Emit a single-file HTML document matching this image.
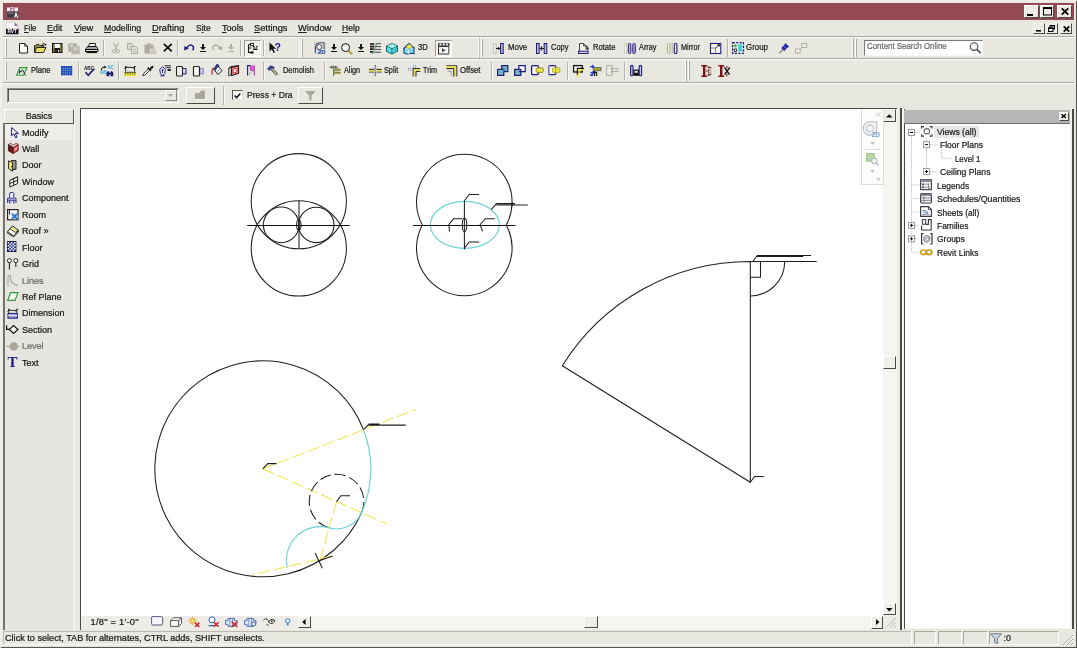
<!DOCTYPE html>
<html lang="en">
<head>
<meta charset="utf-8">
<title>Revit</title>
<style>
*{box-sizing:border-box;margin:0;padding:0}
html,body{width:1077px;height:648px;overflow:hidden;background:#E8E7E0}
body{position:relative;will-change:transform;font-family:"Liberation Sans",sans-serif;font-size:9px;color:#111;line-height:1}
.a{position:absolute}
.t{position:absolute;white-space:nowrap;line-height:13px;height:13px;-webkit-text-stroke:.22px #222}
u{text-decoration:underline;text-underline-offset:1px}
#frame{left:0;top:0;width:1077px;height:648px;border:2px solid #EFEEE9;border-right:1px solid #55534D;border-bottom:1px solid #55534D}
#title{left:3px;top:3px;width:1071px;height:17px;background:#944A52}
.gl{position:absolute;background:#A9A79F}
.wl{position:absolute;background:#FBFBF9}
.dk{position:absolute;background:#4A4944}
.sep{position:absolute;width:2px;border-left:1px solid #B5B3AA;border-right:1px solid #F8F8F5}
.grip{position:absolute;width:2px;border-left:1px solid #fff;border-right:1px solid #A9A79F}
.btn{position:absolute;background:#E8E7E0;border:1px solid #fff;border-right:1px solid #4A4944;border-bottom:1px solid #4A4944}
.sb{background:#EFEEE9}
.pressed{position:absolute;background:#F3F2EE;border:1px solid #9d9b93;border-right:1px solid #fff;border-bottom:1px solid #fff}
svg{position:absolute;overflow:visible}
.pl{left:19px}
.dis{color:#A5A39B}
.tb{font-size:9px}
.tr{font-size:8.6px}
</style>
</head>
<body>
<div id="frame" class="a"></div>
<div id="title" class="a"></div>
<svg style="left:6.5px;top:6.5px" width="11.5" height="11" viewBox="0 0 11.5 11" ><rect x="0" y="0.5" width="3" height="3.8" fill="#f4f4f8"/><rect x="3.6" y="0" width="3" height="4.2" fill="#e4d8ec"/><rect x="7.4" y="0.5" width="3.6" height="3.8" fill="#f4f4f8"/><rect x="4" y="0.8" width="1.6" height="1.4" fill="#c040b0"/><rect x="0.3" y="4.6" width="10.8" height="6" fill="#3a3a42"/><rect x="0.8" y="5.2" width="6" height="2" fill="#6a6a78"/><path d="M7.6 10.6L9 6L10.6 10.6" fill="none" stroke="#f4f4f8" stroke-width="1.3"/></svg>
<div class="btn" style="left:1024px;top:4.5px;width:14.5px;height:13.5px;background:#EDECE7"></div>
<div class="btn" style="left:1039.5px;top:4.5px;width:14.5px;height:13.5px;background:#EDECE7"></div>
<div class="btn" style="left:1057px;top:4.5px;width:14.5px;height:13.5px;background:#EDECE7"></div>
<svg style="left:1027px;top:13.5px" width="6" height="2" viewBox="0 0 6 2" ><rect width="6" height="2" fill="#000"/></svg>
<svg style="left:1042.5px;top:7px" width="9" height="8.5" viewBox="0 0 9 8.5" ><rect x="0.5" y="1" width="8" height="7" fill="none" stroke="#000" stroke-width="1"/><rect x="0" y="0" width="9" height="2" fill="#000"/></svg>
<svg style="left:1060.5px;top:7.5px" width="8" height="7" viewBox="0 0 8 7" ><path d="M0.7 0.3L7.3 6.7M7.3 0.3L0.7 6.7" stroke="#000" stroke-width="1.7"/></svg>
<svg style="left:6px;top:22px" width="12.5" height="12.5" viewBox="0 0 12.5 12.5" ><path d="M0.5 0.5H8.6L12 3.8V12H0.5Z" fill="#fff" stroke="#d8c8d8" stroke-width=".8"/><path d="M8.6 0.5V3.8H12Z" fill="#8a3a9a"/><rect x="0" y="6.8" width="12.5" height="5.4" fill="#15101c"/><text x="1.4" y="11.4" font-family="Liberation Sans,sans-serif" font-size="4.8" font-weight="bold" fill="#fff">RVT</text></svg>
<span class="t mn" style="left:23.8px;top:22.3px;font-size:9px;transform:scaleX(0.855);transform-origin:0 50%;"><u>F</u>ile</span>
<span class="t mn" style="left:47.3px;top:22.3px;font-size:9px;transform:scaleX(0.987);transform-origin:0 50%;"><u>E</u>dit</span>
<span class="t mn" style="left:73.7px;top:22.3px;font-size:9px;transform:scaleX(0.998);transform-origin:0 50%;"><u>V</u>iew</span>
<span class="t mn" style="left:104px;top:22.3px;font-size:9px;transform:scaleX(0.963);transform-origin:0 50%;"><u>M</u>odelling</span>
<span class="t mn" style="left:152px;top:22.3px;font-size:9px;transform:scaleX(1.028);transform-origin:0 50%;"><u>D</u>rafting</span>
<span class="t mn" style="left:195.6px;top:22.3px;font-size:9px;transform:scaleX(0.941);transform-origin:0 50%;">S<u>i</u>te</span>
<span class="t mn" style="left:221.7px;top:22.3px;font-size:9px;transform:scaleX(1.009);transform-origin:0 50%;"><u>T</u>ools</span>
<span class="t mn" style="left:253.8px;top:22.3px;font-size:9px;transform:scaleX(1.030);transform-origin:0 50%;"><u>S</u>ettings</span>
<span class="t mn" style="left:298px;top:22.3px;font-size:9px;transform:scaleX(1.043);transform-origin:0 50%;"><u>W</u>indow</span>
<span class="t mn" style="left:342.3px;top:22.3px;font-size:9px;transform:scaleX(0.956);transform-origin:0 50%;"><u>H</u>elp</span>
<div class="btn" style="left:1033px;top:23px;width:12px;height:10.5px;background:#EDECE7;border-color:#F3F2EE;border-right-color:#4A4944;border-bottom-color:#4A4944"></div>
<div class="btn" style="left:1045.5px;top:23px;width:12px;height:10.5px;background:#EDECE7;border-color:#F3F2EE;border-right-color:#4A4944;border-bottom-color:#4A4944"></div>
<div class="btn" style="left:1060px;top:23px;width:12px;height:10.5px;background:#EDECE7;border-color:#F3F2EE;border-right-color:#4A4944;border-bottom-color:#4A4944"></div>
<svg style="left:1035.5px;top:30px" width="5" height="1.6" viewBox="0 0 5 1.6" ><rect width="5" height="1.6" fill="#000"/></svg>
<svg style="left:1048px;top:25px" width="7" height="7" viewBox="0 0 7 7" ><rect x="2" y="0.5" width="4.5" height="3.5" fill="none" stroke="#000"/><rect x="2" y="0" width="5" height="1.5" fill="#000"/><rect x="0.5" y="3" width="4.5" height="3.5" fill="#EDECE7" stroke="#000"/><rect x="0" y="2.5" width="5.5" height="1.5" fill="#000"/></svg>
<svg style="left:1062.5px;top:25.5px" width="7" height="6" viewBox="0 0 7 6" ><path d="M0.7 0.3L6.3 5.7M6.3 0.3L0.7 5.7" stroke="#000" stroke-width="1.6"/></svg>
<div class="gl" style="left:3px;top:36px;width:1071px;height:1px"></div>
<div class="wl" style="left:3px;top:37px;width:1071px;height:1px"></div>
<div class="grip" style="left:5px;top:39px;height:18px"></div>
<svg style="left:18.5px;top:42.5px" width="9" height="10.5" viewBox="0 0 9 10.5" ><path d="M0.5 0.5H5.8L8.5 3.2V10H0.5Z" fill="#fff" stroke="#222"/><path d="M5.8 0.5V3.2H8.5" fill="none" stroke="#222"/></svg>
<svg style="left:34px;top:43px" width="12.5" height="10" viewBox="0 0 12.5 10" ><path d="M0.5 9.5V2.5H1.5L2.5 1.5H5L6 2.5H9.5V4.5" fill="#8C8A2E" stroke="#222"/><path d="M0.5 9.5L2.8 4.5H12L9.5 9.5Z" fill="#E6DE6E" stroke="#222"/><path d="M8 1.5Q10 -0.3 11.5 1.6" fill="none" stroke="#111" stroke-width="1"/><path d="M10.2 2.5L12.3 2.6L12.2 0.6Z" fill="#111"/></svg>
<svg style="left:51.7px;top:43px" width="10.5" height="10" viewBox="0 0 10.5 10" ><rect x="0.5" y="0.5" width="9.5" height="9" fill="#111" stroke="#111"/><rect x="1" y="1" width="1.5" height="8" fill="#8C8A2E"/><rect x="8" y="1" width="1.5" height="8" fill="#8C8A2E"/><rect x="2.6" y="0.8" width="5.3" height="4.2" fill="#fff"/><rect x="3" y="6.5" width="4.5" height="3" fill="#2a2a2a"/><rect x="6" y="7" width="1.2" height="2" fill="#ddd"/></svg>
<svg style="left:68.2px;top:42.5px" width="12" height="11" viewBox="0 0 12 11" ><rect x="0.3" y="0.3" width="8.5" height="8.5" fill="#AFAD9F"/><rect x="3.5" y="3" width="8.3" height="8" fill="#B9B7AA" stroke="#C9C7BC" stroke-width=".6"/><rect x="2" y="1" width="3" height="2.6" fill="#D5D4CB"/><rect x="6" y="4.5" width="3.4" height="2.6" fill="#D5D4CB"/></svg>
<svg style="left:84.8px;top:43px" width="13.5" height="10" viewBox="0 0 13.5 10" ><path d="M3.5 3.5L4.5 0.5H10.5L10 3.5Z" fill="#fff" stroke="#222"/><path d="M0.5 6.5L2.5 3.5H11.5L13 6.5V8.5H0.5Z" fill="#d8d8d8" stroke="#111"/><path d="M0.5 6.5H13" stroke="#111"/><path d="M1.5 9.5H12" stroke="#111" stroke-width="1.2"/><path d="M2.5 5H11" stroke="#555" stroke-width=".8"/></svg>
<div class="sep" style="left:103px;top:40px;height:16px"></div>
<svg style="left:111.5px;top:43px" width="8" height="11" viewBox="0 0 8 11" ><path d="M1.5 0L5 6.5M6.5 0L3 6.5" stroke="#AFAD9F" stroke-width="1.1" fill="none"/><circle cx="2" cy="8.3" r="1.6" fill="none" stroke="#AFAD9F" stroke-width="1"/><circle cx="6" cy="8.3" r="1.6" fill="none" stroke="#AFAD9F" stroke-width="1"/></svg>
<svg style="left:127px;top:43px" width="11" height="11" viewBox="0 0 11 11" ><path d="M0.5 0.5H4.5L6 2V6.5H0.5Z" fill="#D9D8CF" stroke="#AFAD9F"/><path d="M4.5 3.5H8.5L10.5 5.5V10.5H4.5Z" fill="#E2E1D9" stroke="#AFAD9F"/><path d="M6 6.5H9M6 8.5H9" stroke="#AFAD9F" stroke-width=".8"/></svg>
<svg style="left:143.5px;top:42.5px" width="12" height="11" viewBox="0 0 12 11" ><rect x="0.5" y="1.5" width="9" height="9" rx="1" fill="#AFAD9F"/><rect x="3" y="0.3" width="4" height="2.2" fill="#AFAD9F"/><path d="M5.5 5.5H10L11.5 7V10.5H5.5Z" fill="#D9D8CF" stroke="#B8B6AA" stroke-width=".8"/><path d="M7 8.5H10" stroke="#AFAD9F" stroke-width=".8"/></svg>
<svg style="left:163px;top:43px" width="9.6" height="9.2" viewBox="0 0 9.6 9.2" ><path d="M0.8 0.8L8.8 8.4M8.8 0.8L0.8 8.4" stroke="#111" stroke-width="1.8" fill="none"/></svg>
<div class="sep" style="left:177px;top:40px;height:16px"></div>
<svg style="left:183.8px;top:44px" width="10.5" height="7" viewBox="0 0 10.5 7" ><path d="M3 4Q5.6 -0.6 8.6 1.8Q10.6 4 8.6 6.4" fill="none" stroke="#1c1c7a" stroke-width="1.4"/><path d="M0.1 6.4L0.6 1.8L4.8 4.4Z" fill="#1c1c7a"/></svg>
<svg style="left:200px;top:44px" width="6" height="8" viewBox="0 0 6 8" ><path d="M2 0h2v3h2L3 6 0 3h2z" fill="#111"/><path d="M0 7.5h6" stroke="#111" stroke-width="1"/></svg>
<svg style="left:211.5px;top:44px" width="10.5" height="7" viewBox="0 0 10.5 7" ><path d="M7.5 4Q4.9 -0.6 1.9 1.8Q-0.1 4 1.9 6.4" fill="none" stroke="#AFAD9F" stroke-width="1.3"/><path d="M10.4 6.4L9.9 1.8L5.7 4.4Z" fill="#AFAD9F"/></svg>
<svg style="left:227.5px;top:44px" width="6" height="8" viewBox="0 0 6 8" ><path d="M2 0h2v3h2L3 6 0 3h2z" fill="#AFAD9F"/><path d="M0 7.5h6" stroke="#AFAD9F" stroke-width="1"/></svg>
<div class="sep" style="left:239.5px;top:40px;height:16px"></div>
<div class="pressed" style="left:243.5px;top:39.5px;width:17px;height:17px"></div>
<svg style="left:247px;top:42.5px" width="11" height="11" viewBox="0 0 11 11" ><path d="M1.5 1.5V9.5H4M1.5 5H4.5M1.5 1.5H4" fill="none" stroke="#111" stroke-width="1.1"/><rect x="3.5" y="0.3" width="3" height="2.4" fill="#fff" stroke="#111" stroke-width=".9"/><rect x="3.5" y="8.3" width="3" height="2.4" fill="#111"/><path d="M6 3.8H10.5M6 6.3H10.5" stroke="#111" stroke-width="1.6"/><rect x="7.6" y="3" width="1.5" height="1.5" fill="#eee"/></svg>
<div class="sep" style="left:262.5px;top:40px;height:16px"></div>
<svg style="left:268.5px;top:42px" width="12" height="12" viewBox="0 0 12 12" ><path d="M0.5 0.5V9.5L2.8 7.3L4.6 11L6 10.3L4.3 6.7H7.2Z" fill="#111"/><text x="5.5" y="8.6" font-family="Liberation Sans,sans-serif" font-weight="bold" font-size="10.5" fill="#1c1c7a">?</text></svg>
<div class="wl" style="left:298.5px;top:39px;width:1px;height:18px"></div>
<div class="grip" style="left:301.3px;top:39px;height:18px"></div>
<svg style="left:313.5px;top:41.5px" width="11.5" height="12" viewBox="0 0 11.5 12" ><rect x="0" y="0" width="11.5" height="12" fill="#C3CCD6"/><path d="M1.5 10.5V4.5A4 4 0 0 1 5.5 0.8H10V7" fill="#EEF1F4" stroke="#3a3f48" stroke-width="1"/><circle cx="5.3" cy="5" r="2.6" fill="#EEF1F4" stroke="#3a3f48" stroke-width="1"/><text x="4" y="11.6" font-family="Liberation Sans,sans-serif" font-weight="bold" font-size="6" fill="#1d4fa8">2D</text></svg>
<svg style="left:330.5px;top:44px" width="6" height="8" viewBox="0 0 6 8" ><path d="M2 0h2v3h2L3 6 0 3h2z" fill="#111"/><path d="M0 7.5h6" stroke="#111" stroke-width="1"/></svg>
<svg style="left:341px;top:42.5px" width="12" height="11.5" viewBox="0 0 12 11.5" ><circle cx="4.6" cy="4.6" r="4" fill="#F4F4F0" stroke="#111" stroke-width="1"/><path d="M7.6 7.6L11 11" stroke="#8C8A2E" stroke-width="2.2"/><path d="M7.8 7.4L11.3 10.6" stroke="#E6DE6E" stroke-width=".9"/></svg>
<svg style="left:357.8px;top:44px" width="6" height="8" viewBox="0 0 6 8" ><path d="M2 0h2v3h2L3 6 0 3h2z" fill="#111"/><path d="M0 7.5h6" stroke="#111" stroke-width="1"/></svg>
<svg style="left:370px;top:42.5px" width="11" height="11" viewBox="0 0 11 11" ><path d="M0 1H4.5M0 3.6H4.3M0 6.2H3.6M0 8.8H2.6" stroke="#111" stroke-width="1.7"/><path d="M6.5 0.7H11M6 3.6H11M5 6.4H11M4.2 9.2H11" stroke="#333" stroke-width=".9"/><path d="M6.8 0L2.6 11" stroke="#2a8f8f" stroke-width="1"/></svg>
<svg style="left:386px;top:42.5px" width="12" height="11.5" viewBox="0 0 12 11.5" ><path d="M6 0.5L11.5 3V8.3L6 11L0.5 8.3V3Z" fill="#5FE0E6" stroke="#0f5f66" stroke-width="1"/><path d="M0.5 3L6 5.6L11.5 3M6 5.6V11" fill="none" stroke="#0f5f66" stroke-width="1"/><path d="M6 0.9L10.8 3L6 5.2L1.2 3Z" fill="#A8F2F4"/><path d="M6.4 6L11 3.8V8L6.4 10.3Z" fill="#3CC6CF"/></svg>
<svg style="left:403.3px;top:42.5px" width="12" height="11.5" viewBox="0 0 12 11.5" ><path d="M1 5.5V10L4.5 11.2L7 10.2L11 10.6V5.5" fill="#7ad7ee" stroke="#0d3e8a" stroke-width="1.1"/><path d="M0.3 6L6 0.6L11.7 5.6" fill="none" stroke="#0d3e8a" stroke-width="1.3"/><path d="M6 1L9.5 3.6L6.6 6L3 3.8Z" fill="#F2E94E" stroke="#8C8A2E" stroke-width=".6"/><rect x="4.6" y="7.5" width="2" height="3.2" fill="#E9E8E2"/></svg>
<span class="t tb" style="left:417.8px;top:41.3px;font-size:9px;transform:scaleX(0.852);transform-origin:0 50%;">3D</span>
<div class="pressed" style="left:435px;top:39.5px;width:17px;height:17px"></div>
<svg style="left:438px;top:42.5px" width="12" height="11.5" viewBox="0 0 12 11.5" ><rect x="0.5" y="3.5" width="10" height="7.5" fill="#F5F5F2" stroke="#333" stroke-width="1"/><path d="M0 1.5H11.5" stroke="#333" stroke-width="2.6"/><rect x="1.5" y="0.6" width="2" height="1.8" fill="#eee"/><rect x="4.8" y="0.6" width="2" height="1.8" fill="#eee"/><rect x="8" y="0.6" width="2" height="1.8" fill="#eee"/><path d="M4 5.3V9.3L7.6 7.3Z" fill="#444"/><rect x="10.5" y="3.5" width="1.3" height="7.5" fill="#B9B7AE"/></svg>
<div class="wl" style="left:477.5px;top:38px;width:1px;height:20px"></div><div class="gl" style="left:478.5px;top:38px;width:1px;height:20px;opacity:.6"></div>
<div class="grip" style="left:481.3px;top:39px;height:18px"></div>
<svg style="left:493.3px;top:42.5px" width="11" height="11" viewBox="0 0 11 11" ><rect x="0.5" y="0.5" width="2.6" height="10" fill="#F1F0EA" stroke="#C5C3B8" stroke-width="1"/><rect x="7.6" y="0.5" width="2.6" height="10" fill="#B8B8E0" stroke="#1c1c7a" stroke-width="1"/><path d="M3 5.5H7" stroke="#111" stroke-width="1.1"/><path d="M5.2 3.8L7.4 5.5L5.2 7.2Z" fill="#111"/></svg>
<span class="t tb" style="left:507.9px;top:41.3px;font-size:9px;transform:scaleX(0.872);transform-origin:0 50%;">Move</span>
<svg style="left:536.2px;top:42.5px" width="11.5" height="11" viewBox="0 0 11.5 11" ><rect x="0.5" y="0.5" width="2.6" height="10" fill="#B8B8E0" stroke="#1c1c7a" stroke-width="1"/><rect x="8.2" y="0.5" width="2.6" height="10" fill="#B8B8E0" stroke="#1c1c7a" stroke-width="1"/><path d="M3.4 5.5H8" stroke="#111" stroke-width="1.1"/><path d="M5.4 3.4V7.6" stroke="#111" stroke-width="1.2"/></svg>
<span class="t tb" style="left:551.1px;top:41.3px;font-size:9px;transform:scaleX(0.833);transform-origin:0 50%;">Copy</span>
<svg style="left:577.6px;top:42.5px" width="11" height="11" viewBox="0 0 11 11" ><path d="M1.5 8V0.5H5.5L8 3V6.5" fill="#F4F3EE" stroke="#444" stroke-width="1"/><path d="M5.5 0.5V3H8" fill="none" stroke="#444" stroke-width=".9"/><path d="M7.8 2.6Q10.6 3.6 9.8 6" fill="none" stroke="#111" stroke-width="1"/><path d="M8.3 5.2L10.9 5.6L9.7 7.6Z" fill="#111"/><rect x="0.5" y="8.2" width="9.6" height="2.3" fill="#D8D8F0" stroke="#1c1c7a" stroke-width="1"/></svg>
<span class="t tb" style="left:592.9px;top:41.3px;font-size:9px;transform:scaleX(0.845);transform-origin:0 50%;">Rotate</span>
<svg style="left:624.1px;top:42.5px" width="12.3" height="11" viewBox="0 0 12.3 11" ><rect x="0.4" y="0.4" width="2" height="10.2" fill="#F4F3EE" stroke="#CBC9BF" stroke-width=".8"/><rect x="4.3" y="0.5" width="2.5" height="10" rx="1" fill="#B8B8E0" stroke="#1c1c7a" stroke-width="1"/><rect x="8.8" y="0.5" width="2.5" height="10" rx="1" fill="#B8B8E0" stroke="#1c1c7a" stroke-width="1"/></svg>
<span class="t tb" style="left:639.2px;top:41.3px;font-size:9px;transform:scaleX(0.814);transform-origin:0 50%;">Array</span>
<svg style="left:667.3px;top:42.5px" width="11" height="11" viewBox="0 0 11 11" ><rect x="0.5" y="0.5" width="2.6" height="10" rx="1" fill="#E6EDD6" stroke="#A9B88C" stroke-width="1"/><path d="M5.2 0V11" stroke="#888" stroke-width=".9" stroke-dasharray="1.2 1"/><rect x="7.3" y="0.5" width="2.6" height="10" rx="1" fill="#EEEEF8" stroke="#1c1c7a" stroke-width="1.1"/></svg>
<span class="t tb" style="left:681px;top:41.3px;font-size:9px;transform:scaleX(0.809);transform-origin:0 50%;">Mirror</span>
<svg style="left:710.2px;top:42.5px" width="11.5" height="11" viewBox="0 0 11.5 11" ><rect x="0.5" y="0.5" width="10.3" height="10" fill="#F6F6F2" stroke="#1c1c7a" stroke-width="1.1"/><path d="M0.5 5H5.6V10.5" fill="none" stroke="#777" stroke-width=".9"/><path d="M5.6 5L9.3 1.6" stroke="#111" stroke-width="1"/><path d="M7 1.2H9.8V4Z" fill="#111"/></svg>
<div class="sep" style="left:726.8px;top:39px;height:18px"></div>
<svg style="left:731.6px;top:42px" width="12" height="12" viewBox="0 0 12 12" ><rect x="0.6" y="0.6" width="10.8" height="10.8" fill="none" stroke="#1c1c7a" stroke-width="1.3" stroke-dasharray="2.2 1.3"/><rect x="6.2" y="2.2" width="3.6" height="7.4" fill="#3FD0D8"/><rect x="2.3" y="2.3" width="2.2" height="3" fill="#3fae3f"/><rect x="2.3" y="7" width="2.2" height="2.4" fill="#fff" stroke="#111" stroke-width=".8"/></svg>
<span class="t tb" style="left:746.3px;top:41.3px;font-size:9px;transform:scaleX(0.880);transform-origin:0 50%;">Group</span>
<svg style="left:778.8px;top:43px" width="10" height="10.5" viewBox="0 0 10 10.5" ><path d="M0.4 10.2L4 6.4" stroke="#333" stroke-width="1"/><path d="M2.6 5L5.6 2.2L6.4 0.6L9.6 3.6L8 4.5L5.3 7.6Z" fill="#2727c4" stroke="#1c1c7a" stroke-width=".8"/><path d="M4.8 3.4L7 5.6" stroke="#8a8af0" stroke-width=".8"/></svg>
<svg style="left:795px;top:43px" width="12.5" height="10.5" viewBox="0 0 12.5 10.5" ><rect x="7" y="0.5" width="4.6" height="4" fill="#F3F2EC" stroke="#AFAD9F" stroke-width="1"/><rect x="0.5" y="6" width="4.6" height="4" fill="#F3F2EC" stroke="#AFAD9F" stroke-width="1"/><path d="M5 6.2L7.2 4.4" stroke="#AFAD9F" stroke-width="1"/></svg>
<div class="wl" style="left:852px;top:38px;width:1px;height:20px"></div><div class="gl" style="left:853px;top:38px;width:1px;height:20px"></div>
<div class="grip" style="left:855px;top:39px;height:18px"></div>
<div class="a" style="left:864px;top:40px;width:118.5px;height:15.5px;background:#fff;border:1px solid #7d7b74;border-right-color:#F8F8F5;border-bottom-color:#F8F8F5"></div>
<span class="t" style="left:867px;top:40.4px;color:#A09E98;font-size:9px;transform:scaleX(0.875);transform-origin:0 50%;">Content Search Online</span>
<svg style="left:968.5px;top:42px" width="13" height="12" viewBox="0 0 13 12" ><circle cx="5" cy="4.6" r="3.8" fill="#F2F6FA" stroke="#4b4b4b" stroke-width="1.1"/><path d="M7.8 7.4L11.6 11" stroke="#555" stroke-width="1.8"/></svg>
<div class="gl" style="left:3px;top:58px;width:1071px;height:1px"></div>
<div class="wl" style="left:3px;top:59px;width:1071px;height:1px"></div>
<div class="grip" style="left:5px;top:62px;height:18px"></div>
<svg style="left:16px;top:66.5px" width="11.5" height="9" viewBox="0 0 11.5 9" ><path d="M3.8 0.6H11L7.5 8.2H0.6Z" fill="none" stroke="#2f9a3a" stroke-width="1.1"/><path d="M3.5 6.8V3.4L5 5.2L6.6 2.8M6.6 2.8L9.6 8.6" fill="none" stroke="#222" stroke-width=".9"/></svg>
<span class="t tb" style="left:31.2px;top:64.4px;font-size:9px;transform:scaleX(0.847);transform-origin:0 50%;">Plane</span>
<svg style="left:60.9px;top:65.8px" width="11.5" height="9.6" viewBox="0 0 11.5 9.6" ><rect width="11.3" height="9.4" fill="#8fb0ee"/><rect x="0.0" y="0.0" width="1.9" height="2" fill="#1440b0"/><rect x="0.0" y="2.4" width="1.9" height="2" fill="#1440b0"/><rect x="0.0" y="4.8" width="1.9" height="2" fill="#1440b0"/><rect x="0.0" y="7.2" width="1.9" height="2" fill="#1440b0"/><rect x="2.3" y="0.0" width="1.9" height="2" fill="#1440b0"/><rect x="2.3" y="2.4" width="1.9" height="2" fill="#1440b0"/><rect x="2.3" y="4.8" width="1.9" height="2" fill="#1440b0"/><rect x="2.3" y="7.2" width="1.9" height="2" fill="#1440b0"/><rect x="4.6" y="0.0" width="1.9" height="2" fill="#1440b0"/><rect x="4.6" y="2.4" width="1.9" height="2" fill="#1440b0"/><rect x="4.6" y="4.8" width="1.9" height="2" fill="#1440b0"/><rect x="4.6" y="7.2" width="1.9" height="2" fill="#1440b0"/><rect x="6.9" y="0.0" width="1.9" height="2" fill="#1440b0"/><rect x="6.9" y="2.4" width="1.9" height="2" fill="#1440b0"/><rect x="6.9" y="4.8" width="1.9" height="2" fill="#1440b0"/><rect x="6.9" y="7.2" width="1.9" height="2" fill="#1440b0"/><rect x="9.2" y="0.0" width="1.9" height="2" fill="#1440b0"/><rect x="9.2" y="2.4" width="1.9" height="2" fill="#1440b0"/><rect x="9.2" y="4.8" width="1.9" height="2" fill="#1440b0"/><rect x="9.2" y="7.2" width="1.9" height="2" fill="#1440b0"/></svg>
<div class="sep" style="left:78px;top:62px;height:18px"></div>
<svg style="left:83.8px;top:65.5px" width="11" height="10.5" viewBox="0 0 11 10.5" ><text x="0" y="4" font-family="Liberation Sans,sans-serif" font-weight="bold" font-size="4.6" fill="#111">ABC</text><path d="M1.5 6.2L4.3 9.3L10.3 2.6" fill="none" stroke="#1c1c7a" stroke-width="1.6"/></svg>
<svg style="left:99.9px;top:64.8px" width="13.5" height="11.5" viewBox="0 0 13.5 11.5" ><path d="M1 5.5Q1.2 2 5 2" fill="none" stroke="#111" stroke-width="1"/><path d="M4.4 0.4L6.6 2L4.4 3.6Z" fill="#111"/><text x="7.2" y="4.4" font-family="Liberation Sans,sans-serif" font-weight="bold" font-size="4.6" fill="#2aa6d8">AC</text><text x="0" y="9" font-family="Liberation Sans,sans-serif" font-weight="bold" font-size="4.6" fill="#2aa6d8">AB</text><path d="M6.5 11.2V8L7.6 6.2H9L9.6 8H10.2L10.8 6.2H12.2L13.3 8V11.2H10.6V9.4H9.2V11.2Z" fill="#1c1c7a"/></svg>
<div class="sep" style="left:118px;top:62px;height:18px"></div>
<svg style="left:123.8px;top:64.8px" width="12.3" height="11.5" viewBox="0 0 12.3 11.5" ><rect x="0" y="7.2" width="12.3" height="4" fill="#EDE63C"/><path d="M1.5 8.4V9.8M3.8 8.4V9.4M6.1 8.4V9.8M8.4 8.4V9.4M10.7 8.4V9.8" stroke="#333" stroke-width=".9"/><path d="M0.3 7.3H12" stroke="#333" stroke-width=".9"/><path d="M1.6 1V6.4M10.6 1V6.4M1.6 2.4H10.6" fill="none" stroke="#222" stroke-width="1"/><path d="M0.4 3.6L2.8 1.2M9.4 3.6L11.8 1.2" stroke="#222" stroke-width=".9"/></svg>
<svg style="left:141.8px;top:64.8px" width="12" height="11.5" viewBox="0 0 12 11.5" ><path d="M0.8 10.8L1.4 8.8L6.4 3.8L7.8 5.2L2.8 10.2Z" fill="#F6F6F2" stroke="#222" stroke-width=".9"/><path d="M5.8 2.6L9 5.8" stroke="#111" stroke-width="1.6"/><path d="M7.2 4L9.2 1.4Q10.6 0.2 11.3 1.2Q12 2.2 10.6 3.2L8.2 5Z" fill="#111"/></svg>
<svg style="left:158.8px;top:64.8px" width="12" height="11.5" viewBox="0 0 12 11.5" ><path d="M3.6 1.6L6.4 4.6L5.8 8.4L3.6 10.8L1.4 8.4L0.8 4.6Z" fill="#F2F2FA" stroke="#1c1c7a" stroke-width="1"/><path d="M3.6 4.4V8.2" stroke="#1c1c7a" stroke-width=".9"/><circle cx="3.6" cy="5" r=".9" fill="#1c1c7a"/><path d="M1.4 10.8H5.8" stroke="#1c1c7a" stroke-width="1"/><path d="M5.6 0.8H11.8M6.6 2.8H11.8" stroke="#222" stroke-width="1.1"/><rect x="8.6" y="4.2" width="3.2" height="1.8" fill="#111"/></svg>
<svg style="left:175.9px;top:65.5px" width="10.5" height="10.5" viewBox="0 0 10.5 10.5" ><rect x="5" y="2.6" width="5" height="5.2" fill="#E2E2F4" stroke="#1c1c7a" stroke-width="1"/><rect x="0.5" y="0.5" width="6" height="9.5" rx="1" fill="#F6F6F2" stroke="#222" stroke-width="1.1"/><path d="M3.4 2V8.4" stroke="#bbb" stroke-width=".8" stroke-dasharray="1 1"/></svg>
<svg style="left:193.3px;top:65.5px" width="11" height="10.5" viewBox="0 0 11 10.5" ><rect x="5.6" y="2.6" width="4.8" height="5.2" fill="#C9C9EC" stroke="#8a8ac8" stroke-width="1"/><rect x="0.5" y="0.5" width="6" height="9.5" rx="1" fill="#FBFBF9" stroke="#222" stroke-width="1.2"/></svg>
<svg style="left:210.5px;top:64.4px" width="12" height="11.5" viewBox="0 0 12 11.5" ><path d="M1 10.8V6.4Q1.2 4.6 3 4.2" fill="none" stroke="#d42a2a" stroke-width="1.3"/><path d="M5.8 1.2L11.2 6.4L7 10.6L2.6 5.2Z" fill="#F4F6FA" stroke="#111" stroke-width="1"/><path d="M2.6 5.2L5.8 1.2L7.4 2.8L4.2 6.8Z" fill="#2a3f8a"/><path d="M4.6 2.6Q5.2 -0.4 7.4 0.8L8 2.8" fill="none" stroke="#1c1c7a" stroke-width="1"/><path d="M6 8L9.6 4.6" stroke="#8aa0d0" stroke-width="1"/></svg>
<svg style="left:227.9px;top:64.8px" width="11.5" height="11.5" viewBox="0 0 11.5 11.5" ><path d="M0.8 3.2L3.4 1.6V9.6L0.8 10.8Z" fill="#F4F4F0" stroke="#111" stroke-width=".9"/><path d="M3.4 2.6L10.6 0.6V8.4L3.4 10.6Z" fill="#E88C8C" stroke="#111" stroke-width="1"/><path d="M5 4.2L9 3.1V7L5 8.2Z" fill="#F6DADA" stroke="#c23030" stroke-width=".9"/><path d="M0.8 3.2L3.4 1.6L10.6 0.6" fill="none" stroke="#111" stroke-width=".9"/></svg>
<svg style="left:247.2px;top:65px" width="8.5" height="10.8" viewBox="0 0 8.5 10.8" ><path d="M0.6 10.5V0.6H4" fill="none" stroke="#1c1c7a" stroke-width="1.1"/><path d="M3.4 0.4H7.6V5.2H3.4Z" fill="#E55AD8"/><path d="M7.4 0.6V10.5" stroke="#C040B8" stroke-width="1.2"/><path d="M3.4 0.6V5.2H7" fill="none" stroke="#b030a8" stroke-width=".9"/><path d="M1.6 9.6L6.6 5.6" stroke="#999" stroke-width=".7"/></svg>
<div class="sep" style="left:262.5px;top:62px;height:18px"></div>
<svg style="left:266.9px;top:65px" width="11" height="10.8" viewBox="0 0 11 10.8" ><path d="M0.6 3.8L3.6 0.8L7.4 2.4L6.2 3.6L4.6 3L2.4 5.4Z" fill="#3a4a9a" stroke="#1c1c7a" stroke-width=".8"/><path d="M4.6 4L10.2 9.6" stroke="#333" stroke-width="2.6"/><path d="M4.8 4.2L10 9.4" stroke="#E9E2A0" stroke-width="1.2"/></svg>
<span class="t tb" style="left:282.9px;top:64.4px;font-size:9px;transform:scaleX(0.824);transform-origin:0 50%;">Demolish</span>
<div class="sep" style="left:324px;top:62px;height:18px"></div>
<svg style="left:329.3px;top:65px" width="12" height="11" viewBox="0 0 12 11" ><path d="M4.8 0.4V10.8" stroke="#3a5a2a" stroke-width="1"/><path d="M0.4 2.2H3.6M2.4 0.8L3.8 2.2L2.4 3.6M9 2.2H6M7.2 0.8L5.8 2.2L7.2 3.6" fill="none" stroke="#222" stroke-width=".8"/><rect x="5.2" y="4.2" width="6.4" height="1.7" fill="#A8A430"/><rect x="5.2" y="7.2" width="6.4" height="1.7" fill="#A8A430"/><path d="M5.2 4.2H11.6M5.2 7.2H11.6" stroke="#444" stroke-width=".6"/></svg>
<span class="t tb" style="left:343.9px;top:64.4px;font-size:9px;transform:scaleX(0.805);transform-origin:0 50%;">Align</span>
<svg style="left:368.7px;top:64.8px" width="12.7" height="11.5" viewBox="0 0 12.7 11.5" ><path d="M0 4.4H5M7.6 4.4H12.7M0 7H5M7.6 7H12.7" stroke="#222" stroke-width="1"/><path d="M0 5.7H5M7.6 5.7H12.7" stroke="#EDE63C" stroke-width="1.4"/><path d="M6.3 0V11.5" stroke="#1c1c7a" stroke-width="1" stroke-dasharray="1.4 1"/><path d="M3.8 1.6L8.8 9.8M8.8 1.6L3.8 9.8" stroke="#7a7ac0" stroke-width=".6" stroke-dasharray="1 1"/></svg>
<span class="t tb" style="left:384.3px;top:64.4px;font-size:9px;transform:scaleX(0.811);transform-origin:0 50%;">Split</span>
<svg style="left:407.7px;top:64.8px" width="12.3" height="11.5" viewBox="0 0 12.3 11.5" ><path d="M0 3.4H5M0 5.2H3.6" stroke="#7a7ac0" stroke-width=".9" stroke-dasharray="1.2 1"/><path d="M5.6 0V3M7.6 0V3" stroke="#7a7ac0" stroke-width=".9" stroke-dasharray="1.2 1"/><path d="M12.3 3.6H5.2V11.5" fill="none" stroke="#222" stroke-width="1"/><path d="M12.3 5H6.6V11.5" fill="none" stroke="#EDE63C" stroke-width="1.6"/><path d="M12.3 6.4H8V11.5" fill="none" stroke="#222" stroke-width="1"/></svg>
<span class="t tb" style="left:422.9px;top:64.4px;font-size:9px;transform:scaleX(0.799);transform-origin:0 50%;">Trim</span>
<svg style="left:445.8px;top:64.8px" width="11.5" height="11.5" viewBox="0 0 11.5 11.5" ><path d="M0.4 0.8H10.8V11.5" fill="none" stroke="#222" stroke-width="1"/><path d="M0.4 2.2H9.3V11.5" fill="none" stroke="#EDE63C" stroke-width="1.7"/><path d="M0.4 3.6H7.8V11.5" fill="none" stroke="#222" stroke-width="1"/><path d="M1.6 6.2H5.2V10.8" fill="none" stroke="#999" stroke-width="1"/></svg>
<span class="t tb" style="left:460.4px;top:64.4px;font-size:9px;transform:scaleX(0.860);transform-origin:0 50%;">Offset</span>
<div class="sep" style="left:491px;top:62px;height:18px"></div>
<svg style="left:496.8px;top:65px" width="11.5" height="11" viewBox="0 0 11.5 11" ><rect x="4.6" y="0.6" width="6.2" height="6" fill="#6FB8C0" stroke="#1c1c7a" stroke-width="1.2"/><rect x="0.6" y="4.4" width="6.2" height="6" fill="#6FB8C0" stroke="#1c1c7a" stroke-width="1.2"/><rect x="5" y="4.8" width="1.6" height="1.6" fill="#6FB8C0"/></svg>
<svg style="left:513.9px;top:65px" width="11.8" height="11" viewBox="0 0 11.8 11" ><rect x="4.8" y="0.6" width="6.4" height="6" fill="#FBFBF9" stroke="#1c1c7a" stroke-width="1.2"/><rect x="0.6" y="4.4" width="6.2" height="6" fill="#6FB8C0" stroke="#1c1c7a" stroke-width="1.2"/><path d="M4.8 6.6H11.2" stroke="#1c1c7a" stroke-width="1"/></svg>
<svg style="left:530.9px;top:65.3px" width="12.8" height="10.4" viewBox="0 0 12.8 10.4" ><rect x="0.6" y="0.6" width="6.8" height="9" rx="1" fill="#FBFBF9" stroke="#1c1c7a" stroke-width="1.3"/><rect x="5.2" y="3" width="7" height="4.4" rx=".6" fill="#EDE63C" stroke="#8C8A2E" stroke-width=".9"/></svg>
<svg style="left:548px;top:65.3px" width="12.3" height="10.4" viewBox="0 0 12.3 10.4" ><rect x="0.6" y="0.6" width="7.2" height="9" rx="1" fill="#FBFBF9" stroke="#1c1c7a" stroke-width="1.1"/><rect x="0.3" y="0.6" width="1.6" height="9" fill="#9A9AD8"/><rect x="4.6" y="2.8" width="7.2" height="4.6" rx=".6" fill="#EDE63C" stroke="#A8A430" stroke-width=".9"/><path d="M7.8 2.8V7.4" stroke="#A8A430" stroke-width=".9"/></svg>
<div class="sep" style="left:566.5px;top:62px;height:18px"></div>
<svg style="left:572.8px;top:65.3px" width="11.5" height="11" viewBox="0 0 11.5 11" ><rect x="0.6" y="0.6" width="8.6" height="6.4" fill="#FBFBF9" stroke="#111" stroke-width="1.3"/><path d="M11 3.4H4.4V10.6" fill="none" stroke="#111" stroke-width="1.2"/><path d="M11 5H6V9" fill="none" stroke="#EDE63C" stroke-width="1.4"/><path d="M3 10.4H6.4" stroke="#EDE63C" stroke-width="1.6"/></svg>
<svg style="left:589.9px;top:65px" width="11.2" height="11.2" viewBox="0 0 11.2 11.2" ><rect x="3.4" y="2.4" width="7.6" height="3.4" fill="#A8A430" stroke="#555" stroke-width=".7"/><path d="M0 1.6H3.4M2.2 0.2L3.8 1.6L2.2 3" fill="none" stroke="#2a3ad0" stroke-width="1.1"/><path d="M0.4 7.6H3.6M2.4 6.2L4 7.6L2.4 9" fill="none" stroke="#2a3ad0" stroke-width="1.1"/><path d="M4.4 5.8V11M6.6 7.6V11M4.4 7.4H7" stroke="#111" stroke-width="1.3"/><rect x="0.4" y="9" width="2.4" height="2.2" fill="#2a3ad0"/><path d="M5.2 9.6H6.2" stroke="#EDE63C" stroke-width="1.4"/></svg>
<svg style="left:606.4px;top:65px" width="12.3" height="11" viewBox="0 0 12.3 11" ><rect x="0.6" y="0.6" width="5.2" height="9.8" fill="#F1F0EA" stroke="#AFAD9F" stroke-width="1"/><path d="M0.6 0.6L5.8 5.4L0.6 10.4" fill="none" stroke="#CFCDC3" stroke-width=".8"/><rect x="6.4" y="3.6" width="5.4" height="3" fill="#E3E2DA" stroke="#AFAD9F" stroke-width=".9"/><path d="M6.2 1.6V9" stroke="#AFAD9F" stroke-width="1"/></svg>
<div class="sep" style="left:624px;top:62px;height:18px"></div>
<svg style="left:629.8px;top:65px" width="12.3" height="11.2" viewBox="0 0 12.3 11.2" ><rect x="0.6" y="0.6" width="2.4" height="10" rx=".8" fill="#C9C9EC" stroke="#1c1c7a" stroke-width="1.1"/><rect x="9.2" y="0.6" width="2.4" height="10" rx=".8" fill="#C9C9EC" stroke="#1c1c7a" stroke-width="1.1"/><rect x="3.4" y="4.6" width="5.6" height="5.4" fill="#111"/><rect x="4.6" y="5.8" width="3.2" height="2" fill="#E9E8E2"/><path d="M3.4 10.2H9" stroke="#111" stroke-width="1.2"/></svg>
<div class="wl" style="left:685px;top:60px;width:1px;height:22px"></div><div class="gl" style="left:686px;top:60px;width:1px;height:22px"></div>
<div class="grip" style="left:688px;top:61px;height:20px"></div>
<svg style="left:700.7px;top:64.8px" width="10.8" height="12.2" viewBox="0 0 10.8 12.2" ><path d="M0.4 0.8H6.2M0.4 11.2H6.2" stroke="#7a1414" stroke-width="1.6"/><path d="M3.2 0.8V11.2" stroke="#7a1414" stroke-width="2.4"/><path d="M6.6 2.6H10.4M6.6 9.6H10.4M5 6H8" stroke="#7a1414" stroke-width=".9"/><path d="M7.8 1.2V11" stroke="#222" stroke-width="1" stroke-dasharray="1.8 1"/><path d="M9.6 3.4V8.8" stroke="#7a1414" stroke-width=".7" stroke-dasharray="1 1"/></svg>
<svg style="left:718.2px;top:64.8px" width="12.5" height="12.2" viewBox="0 0 12.5 12.2" ><path d="M0.4 0.8H6.2M0.4 11.2H6.2" stroke="#7a1414" stroke-width="1.6"/><path d="M3.2 0.8V11.2" stroke="#7a1414" stroke-width="2.4"/><path d="M6.4 2.4L11.6 9.6M11.8 2.4L6.6 9.6" stroke="#111" stroke-width="1.4"/><path d="M8.8 1V3.4M8.8 8.8V11.4" stroke="#111" stroke-width=".9"/></svg>
<div class="gl" style="left:3px;top:82px;width:1071px;height:1px"></div>
<div class="wl" style="left:3px;top:83px;width:1071px;height:1px"></div>
<div class="a" style="left:7px;top:87.5px;width:171.5px;height:15px;background:#E8E7E0;border:1px solid #8d8b84;border-right-color:#FBFBF9;border-bottom-color:#FBFBF9"></div>
<div class="a" style="left:8px;top:88.5px;width:169.5px;height:13px;border:1px solid #55534D;border-right-color:#DEDDD6;border-bottom-color:#DEDDD6"></div>
<div class="btn" style="left:164.5px;top:89.5px;width:12px;height:11px;border-right-color:#8d8b84;border-bottom-color:#8d8b84"></div>
<svg style="left:168px;top:93.5px" width="5" height="3" viewBox="0 0 5 3" ><path d="M0 0H5L2.5 3Z" fill="#A5A39B"/></svg>
<div class="btn" style="left:185.5px;top:87px;width:29.5px;height:16.5px;border-right-width:1.5px;border-bottom-width:1.5px"></div>
<svg style="left:195px;top:90px" width="11" height="10" viewBox="0 0 11 10" ><path d="M0 3H4L6 0.5H10.5V9.5H0Z" fill="#A9A796"/><path d="M10.5 1V9.5H0.5" fill="none" stroke="#FBFBF9" stroke-width=".8"/></svg>
<div class="sep" style="left:223px;top:86px;height:19px"></div>
<div class="a" style="left:232px;top:90.2px;width:10.5px;height:10px;background:#fff;border:1px solid #55534D;border-right-color:#DEDDD6;border-bottom-color:#DEDDD6"></div>
<svg style="left:234px;top:92.5px" width="7" height="6" viewBox="0 0 7 6" ><path d="M0.6 2.4L2.6 4.6L6.4 0.6" fill="none" stroke="#111" stroke-width="1.5"/></svg>
<span class="t" style="left:246.8px;top:88.5px;font-size:9px;transform:scaleX(0.953);transform-origin:0 50%;">Press + Dra</span>
<div class="btn" style="left:298px;top:87px;width:25px;height:16.5px;border-right-width:1.5px;border-bottom-width:1.5px"></div>
<svg style="left:304.5px;top:90.5px" width="11" height="9.5" viewBox="0 0 11 9.5" ><path d="M0 0H11L6.8 4.6V9.4H4.2V4.6Z" fill="#A9A796"/><path d="M11 0.4L7 4.8V9.4" fill="none" stroke="#F6F6F2" stroke-width=".7"/></svg>
<div class="a" style="left:4px;top:124px;width:69px;height:506px;background:#E6E5E0"></div>
<div class="a" style="left:5px;top:124px;width:67px;height:16px;background:#EFEEEA"></div>
<div class="btn" style="left:4px;top:109px;width:70px;height:14.5px;border-right-color:#55534D;border-bottom-color:#55534D"></div>
<span class="t" style="left:4px;top:110.2px;width:70px;text-align:center">Basics</span>
<div class="a" style="left:3.4px;top:123px;width:1.5px;height:507px;background:#75736d"></div>
<div class="wl" style="left:74px;top:108px;width:1px;height:522px"></div>
<span class="t" style="left:22px;top:126.5px;">Modify</span>
<span class="t" style="left:22px;top:142.9px;">Wall</span>
<span class="t" style="left:22px;top:159.4px;">Door</span>
<span class="t" style="left:22px;top:175.8px;">Window</span>
<span class="t" style="left:22px;top:192.3px;">Component</span>
<span class="t" style="left:22px;top:208.7px;">Room</span>
<span class="t" style="left:22px;top:225.1px;">Roof »</span>
<span class="t" style="left:22px;top:241.6px;">Floor</span>
<span class="t" style="left:22px;top:258.0px;">Grid</span>
<span class="t dis" style="left:22px;top:274.5px;">Lines</span>
<span class="t" style="left:22px;top:290.9px;">Ref Plane</span>
<span class="t" style="left:22px;top:307.3px;">Dimension</span>
<span class="t" style="left:22px;top:323.8px;">Section</span>
<span class="t dis" style="left:22px;top:340.2px;">Level</span>
<span class="t" style="left:22px;top:356.7px;">Text</span>
<svg style="left:10.5px;top:126.8px" width="8.5" height="11.5" viewBox="0 0 8.5 11.5" ><path d="M0.6 0.6V8.8L2.8 6.8L4.6 10.8L6 10.2L4.3 6.4H7.4Z" fill="#fff" stroke="#1c1c7a" stroke-width="1"/></svg>
<svg style="left:7.8px;top:142.5px" width="10.5" height="10.8" viewBox="0 0 10.5 10.8" ><path d="M0.4 1.6L5.2 4.4V10.6L0.4 7.8Z" fill="#5E1A1A" stroke="#3a0e0e" stroke-width=".8"/><path d="M5.2 4.4L10.2 1.4V7.6L5.2 10.6Z" fill="#D23A3A" stroke="#5E1A1A" stroke-width=".8"/><path d="M6.4 5.2L9.2 3.4V6.6L6.4 8.4Z" fill="#F0A0A0"/><path d="M0.4 1.6L2.4 0.4L5.2 2.2L8 0.4L10.2 1.4" fill="none" stroke="#5E1A1A" stroke-width=".8"/></svg>
<svg style="left:8px;top:159.6px" width="9" height="11.8" viewBox="0 0 9 11.8" ><path d="M3 0.6H8V9.4H5" fill="#9a9a9a" stroke="#222" stroke-width="1"/><path d="M0.6 0.8L4.6 2.6V11.2L0.6 8.6Z" fill="#F0EA6A" stroke="#222" stroke-width="1"/><circle cx="3.6" cy="6.6" r=".6" fill="#222"/></svg>
<svg style="left:8.5px;top:176px" width="9.5" height="11.5" viewBox="0 0 9.5 11.5" ><path d="M0.8 4.2L8.6 0.8V7.6L0.8 11Z" fill="#F6F6F2" stroke="#222" stroke-width="1"/><path d="M4.7 2.5V9.3M0.8 7.6L8.6 4.2" stroke="#222" stroke-width="1"/><path d="M1.6 4L8.6 0.8" stroke="#222" stroke-width=".6"/></svg>
<svg style="left:7px;top:192px" width="10" height="12" viewBox="0 0 10 12" ><path d="M2.6 5.8V1.6Q2.6 0.5 4 0.5H5.4Q6.8 0.5 6.8 1.6V5.8" fill="#F4F4FA" stroke="#1c1c7a" stroke-width=".9"/><path d="M0.6 11V6.2H9V11M0.6 8.6H9" fill="none" stroke="#1c1c7a" stroke-width=".9"/><path d="M2.8 8.8V11.6M6.8 8.8V11.6" stroke="#1c1c7a" stroke-width="1"/><rect x="1.2" y="6.6" width="7.2" height="1.8" fill="#9a9ad8"/></svg>
<svg style="left:7px;top:208.5px" width="11.8" height="11.5" viewBox="0 0 11.8 11.5" ><rect x="0.6" y="0.6" width="10.4" height="10.2" fill="#FBFBF9" stroke="#222" stroke-width="1.2"/><rect x="4.6" y="4.4" width="6" height="6" fill="#9ad4f4"/><path d="M4.8 4.6L10.4 10.2M10.4 4.6L4.8 10.2" stroke="#1a5ad0" stroke-width="1.3"/><path d="M2.6 0.6V5.4" stroke="#222" stroke-width="1"/></svg>
<svg style="left:7px;top:225px" width="12" height="12" viewBox="0 0 12 12" ><path d="M0.6 6.4L5.6 1L11.4 5.4L6.6 11.2Z" fill="#FBFBF2" stroke="#222" stroke-width="1"/><path d="M5.6 1L11.4 5.4L8.4 7.4L3 3.8Z" fill="#F2EE8A" stroke="#222" stroke-width=".8"/><path d="M0.6 6.4V8.2L6.6 11.8V11.2M6.6 11.8L11.4 7V5.4" fill="none" stroke="#222" stroke-width=".9"/></svg>
<svg style="left:7px;top:241.3px" width="9.4" height="11" viewBox="0 0 9.4 11" ><rect x="0.5" y="0.5" width="8.4" height="10" fill="#1c2a8a" stroke="#10104a" stroke-width="1"/><rect x="0.7" y="0.90" width="1.6" height="1.55" fill="#F4F4FA"/><rect x="3.9" y="0.90" width="1.6" height="1.55" fill="#F4F4FA"/><rect x="7.1" y="0.90" width="1.6" height="1.55" fill="#F4F4FA"/><rect x="2.3" y="2.45" width="1.6" height="1.55" fill="#F4F4FA"/><rect x="5.5" y="2.45" width="1.6" height="1.55" fill="#F4F4FA"/><rect x="0.7" y="4.00" width="1.6" height="1.55" fill="#F4F4FA"/><rect x="3.9" y="4.00" width="1.6" height="1.55" fill="#F4F4FA"/><rect x="7.1" y="4.00" width="1.6" height="1.55" fill="#F4F4FA"/><rect x="2.3" y="5.55" width="1.6" height="1.55" fill="#F4F4FA"/><rect x="5.5" y="5.55" width="1.6" height="1.55" fill="#F4F4FA"/><rect x="0.7" y="7.10" width="1.6" height="1.55" fill="#F4F4FA"/><rect x="3.9" y="7.10" width="1.6" height="1.55" fill="#F4F4FA"/><rect x="7.1" y="7.10" width="1.6" height="1.55" fill="#F4F4FA"/><rect x="2.3" y="8.65" width="1.6" height="1.55" fill="#F4F4FA"/><rect x="5.5" y="8.65" width="1.6" height="1.55" fill="#F4F4FA"/></svg>
<svg style="left:7px;top:258px" width="12" height="12" viewBox="0 0 12 12" ><circle cx="2.4" cy="2.6" r="2" fill="#FBFBF9" stroke="#222" stroke-width="1"/><circle cx="8.8" cy="2.6" r="2" fill="#FBFBF9" stroke="#222" stroke-width="1"/><path d="M2.4 4.6V11.4M8.8 4.6V9" stroke="#222" stroke-width="1.1"/></svg>
<svg style="left:7px;top:274.5px" width="11.5" height="12" viewBox="0 0 11.5 12" ><path d="M1 0.6V11.4M1 0.6H3.4V4" fill="none" stroke="#A9A79C" stroke-width="1.1"/><path d="M3.4 4Q4.4 9.4 11 10.6" fill="none" stroke="#A9A79C" stroke-width="1.2"/></svg>
<svg style="left:7px;top:292px" width="11.5" height="9.2" viewBox="0 0 11.5 9.2" ><path d="M3.6 0.7H11L8 8.4H0.7Z" fill="#FBFBF2" stroke="#2f9a3a" stroke-width="1.2"/></svg>
<svg style="left:7px;top:308px" width="11.5" height="11" viewBox="0 0 11.5 11" ><path d="M1.6 0.6V5M9.8 0.6V5M1.6 2.4H9.8M0.4 3.6L2.8 1.2M8.6 3.6L11 1.2" fill="none" stroke="#222" stroke-width=".9"/><rect x="1" y="5.4" width="9.4" height="4.8" fill="#9A9AD8" stroke="#1c1c7a" stroke-width="1"/><path d="M1 7.4H10.4" stroke="#E9E8F4" stroke-width="1"/></svg>
<svg style="left:6px;top:324px" width="13" height="10.5" viewBox="0 0 13 10.5" ><path d="M0.6 1.2V5.4H12.4" fill="none" stroke="#111" stroke-width="1.2"/><path d="M3.4 5.4L7.6 1.6L11.8 5.4L7.6 9.4Z" fill="#FBFBF9" stroke="#111" stroke-width="1.2"/></svg>
<svg style="left:5.5px;top:340.6px" width="13.5" height="10.8" viewBox="0 0 13.5 10.8" ><path d="M0 5.4H13.5" stroke="#A9A79C" stroke-width="1"/><circle cx="7.8" cy="5.4" r="4.2" fill="#A9A696"/></svg>
<svg style="left:7px;top:356px" width="12" height="13" viewBox="0 0 12 13"><text x="0.6" y="11.2" font-family="Liberation Serif,serif" font-size="15" font-weight="bold" fill="#1c1c7a">T</text></svg>
<div class="a" style="left:81px;top:109px;width:803px;height:507px;background:#fff"></div>
<div class="dk" style="left:80px;top:108px;width:817px;height:1px"></div>
<div class="dk" style="left:80px;top:108px;width:1px;height:522px"></div>
<div class="a" style="left:883px;top:109px;width:14px;height:507px;background:#F6F5F1"></div>
<div class="btn sb" style="left:883.2px;top:109px;width:12.6px;height:13px"></div>
<svg style="left:886px;top:113.6px" width="6.6" height="3.6" viewBox="0 0 6.6 3.6" ><path d="M0 3.6H6.6L3.3 0.2Z" fill="#000"/></svg>
<div class="btn sb" style="left:883.2px;top:356px;width:12.8px;height:12.8px"></div>
<div class="btn sb" style="left:883.1px;top:603.2px;width:12.8px;height:12.3px"></div>
<svg style="left:885.8px;top:607.8px" width="6.6" height="3.6" viewBox="0 0 6.6 3.6" ><path d="M0 0H6.6L3.3 3.4Z" fill="#000"/></svg>
<div class="a" style="left:81px;top:616px;width:816px;height:14px;background:#EDECE7"></div>
<div class="a" style="left:311px;top:616px;width:560px;height:13px;background:#F6F5F1"></div>
<span class="t" style="left:90.5px;top:616px;font-size:9.3px;letter-spacing:.25px">1/8" = 1'-0"</span>
<div class="btn sb" style="left:298px;top:615.5px;width:12.5px;height:12.5px"></div>
<svg style="left:301.8px;top:619px" width="3.6" height="6" viewBox="0 0 3.6 6" ><path d="M3.6 0V6L0.2 3Z" fill="#000"/></svg>
<div class="btn sb" style="left:584px;top:615.5px;width:13.5px;height:12.5px"></div>
<div class="btn sb" style="left:871px;top:616px;width:12.3px;height:12.6px"></div>
<svg style="left:875.8px;top:619.2px" width="3.6" height="6" viewBox="0 0 3.6 6" ><path d="M0 0V6L3.4 3Z" fill="#000"/></svg>
<svg style="left:885px;top:617px" width="11" height="11" viewBox="0 0 11 11" ><path d="M10.5 1L1 10.5M10.5 5L5 10.5M10.5 8.6L8.6 10.5" stroke="#B5B3AA" stroke-width="1"/></svg>
<svg style="left:151px;top:616px" width="12.5" height="10" viewBox="0 0 12.5 10" ><rect x="0.6" y="0.6" width="11" height="8.4" rx="1.2" fill="#F4F4FA" stroke="#555a78" stroke-width="1"/></svg>
<svg style="left:170px;top:616.5px" width="12.5" height="10" viewBox="0 0 12.5 10" ><path d="M0.6 3.6H8.6V9.4H0.6ZM0.6 3.6L3.4 0.8H11.6L8.6 3.6M11.6 0.8V6.4L8.6 9.4" fill="#FBFBF9" stroke="#444" stroke-width=".9"/></svg>
<svg style="left:187.5px;top:615.8px" width="12" height="11.5" viewBox="0 0 12 11.5" ><circle cx="4.6" cy="4.8" r="2.4" fill="#F6E27A" stroke="#E0A020" stroke-width="1"/><path d="M4.6 0.4V1.6M4.6 8V9.2M0.2 4.8H1.4M7.8 4.8H9M1.5 1.7L2.4 2.6M7.7 1.7L6.8 2.6M1.5 7.9L2.4 7M6.8 7L7.7 7.9" stroke="#E0A020" stroke-width=".9"/><path d="M7 6.6L11.4 11M11.4 6.6L7 11" stroke="#d02020" stroke-width="1.5"/></svg>
<svg style="left:208px;top:616px" width="11" height="11.5" viewBox="0 0 11 11.5" ><circle cx="4" cy="3.8" r="3" fill="#F4F8FC" stroke="#3a5aa0" stroke-width="1"/><path d="M0.6 9.6H6" stroke="#3a5aa0" stroke-width="1.2"/><path d="M6 6.2L10.6 10.8M10.6 6.2L6 10.8" stroke="#d02020" stroke-width="1.5"/></svg>
<svg style="left:224.5px;top:616px" width="13.5" height="11.5" viewBox="0 0 13.5 11.5" ><path d="M0.5 4.4H3V2.4H9.5V4.4H12V8.6H9.5V10.4H3V8.6H0.5Z" fill="#D6E4F6" stroke="#3a5aa0" stroke-width=".8"/><path d="M4.8 2.4V10.4M7.6 2.4V10.4" stroke="#2a4a9a" stroke-width=".8" stroke-dasharray="1.2 .8"/><path d="M6.6 5.6L12.4 11M12.4 5.6L6.6 11" stroke="#d02020" stroke-width="1.4"/></svg>
<svg style="left:243.5px;top:616px" width="13" height="11.5" viewBox="0 0 13 11.5" ><path d="M0.5 4.4H3V2.4H9.5V4.4H12V8.6H9.5V10.4H3V8.6H0.5Z" fill="#D6E4F6" stroke="#3a5aa0" stroke-width=".8"/><path d="M4.8 2.4V10.4M7.6 2.4V10.4" stroke="#2a4a9a" stroke-width=".8" stroke-dasharray="1.2 .8"/><circle cx="9.6" cy="8" r="2" fill="#F4F8FC" stroke="#2a4a9a" stroke-width=".9"/></svg>
<svg style="left:262.5px;top:617px" width="12.5" height="9.5" viewBox="0 0 12.5 9.5" ><path d="M0.4 3.4Q2.8 0.2 5.2 3.4L7.2 6.2" fill="none" stroke="#333" stroke-width="1"/><path d="M5.6 5.2Q7.6 0.6 12 3.6Q9.6 8.6 5.6 5.2Z" fill="#FBFBF9" stroke="#333" stroke-width="1"/><circle cx="8.8" cy="4.2" r="1" fill="#333"/><path d="M3.6 7L5.6 9" stroke="#333" stroke-width="1"/></svg>
<svg style="left:284.8px;top:617.5px" width="5.5" height="9" viewBox="0 0 5.5 9" ><circle cx="2.7" cy="2.8" r="2.2" fill="#EAF4FF" stroke="#3a7ad0" stroke-width="1"/><path d="M1.8 5.2H3.6V7.4H1.8Z" fill="#3a7ad0"/></svg>
<div class="a" style="left:861px;top:109px;width:22.5px;height:76px;background:#FDFDFC;border:1px solid #DCDBD6;border-top:none"></div>
<svg style="left:875.5px;top:111.5px" width="5" height="5" viewBox="0 0 5 5" ><path d="M0.5 0.5L4.5 4.5M4.5 0.5L0.5 4.5" stroke="#C9C8C4" stroke-width="1"/></svg>
<svg style="left:863px;top:120px" width="18" height="19" viewBox="0 0 18 19" ><path d="M7 1.6H13.8V8.4A6.8 6.8 0 1 1 7 1.6Z" fill="#F1F2F4" stroke="#C2C5CB" stroke-width="1.3"/><circle cx="7" cy="8.4" r="3.3" fill="#FBFBFC" stroke="#C2C5CB" stroke-width="1.1"/><text x="8.8" y="17.3" font-family="Liberation Sans,sans-serif" font-weight="bold" font-size="6.4" fill="#6a9ad8">2D</text></svg>
<svg style="left:869.5px;top:142px" width="5" height="3" viewBox="0 0 5 3" ><path d="M0 0H5L2.5 3Z" fill="#C4C4C0"/></svg>
<div class="a" style="left:865px;top:149px;width:15px;height:1px;background:#DCDBD6"></div>
<svg style="left:866px;top:153px" width="13" height="13" viewBox="0 0 13 13" ><rect x="0.6" y="0.6" width="7.6" height="7.6" fill="#B9D9A8" stroke="#9CC08A" stroke-width="1"/><circle cx="8.4" cy="8" r="2.6" fill="#FBFBFC" stroke="#B4B8C0" stroke-width="1.1"/><path d="M10.2 10L12.4 12.4" stroke="#B4B8C0" stroke-width="1.5"/></svg>
<svg style="left:869.5px;top:169.5px" width="5" height="3" viewBox="0 0 5 3" ><path d="M0 0H5L2.5 3Z" fill="#C4C4C0"/></svg>
<svg style="left:875.5px;top:177.5px" width="5" height="4" viewBox="0 0 5 4" ><path d="M0 0H5L2.5 3.6Z" fill="#D0D0CC"/></svg>
<svg id="dwg" style="left:0;top:0" width="1077" height="648" viewBox="0 0 1077 648" fill="none" stroke="#1e1e1e" stroke-width="1.05">
<circle cx="298.8" cy="201.2" r="47.6"/>
<circle cx="298.8" cy="248.4" r="47.6"/>
<circle cx="281.2" cy="224.9" r="17.8"/>
<circle cx="316.3" cy="224.9" r="17.7"/>
<ellipse cx="298.8" cy="225" rx="2.2" ry="5"/>
<path d="M247.2 225.4H349.7" stroke="#111"/><path d="M299 201V248"/>
<path d="M422.4 225A47.8 47.8 0 1 1 506.2 225A47.8 47.8 0 1 1 422.4 225"/>
<ellipse cx="464.85" cy="224.8" rx="34.5" ry="23.5" stroke="#6AD2DA" stroke-width="1.15"/>
<ellipse cx="464.5" cy="225" rx="2.2" ry="6.8"/>
<path d="M413 225.4H515.6" stroke="#111"/><path d="M464.4 200.7V249.4"/>
<path d="M464.3 200.7L469.2 194.4H479.1M464.3 248.3L469.2 242H479.1M449.5 231.4L448.9 224.5L453.5 218.7H462.2M482.5 231.4L480.2 224.5L485.4 218.7H494.7M491.2 209.6L496.5 203.6H515M496.5 205H527.8M512.1 202.4V206"/>
<path d="M361.5 512.7A108 108 0 1 1 363.5 429.7"/>
<g stroke="#F2E44C" stroke-dasharray="12 4"><path d="M262.8 468.8L416.0 409.5M262.8 468.8L386.8 524.0M336.5 501.6L320.1 560.3M332 556L251.7 575"/></g>
<path d="M361.5 512.7A27.3 27.3 0 1 0 329.2 527.9" stroke-dasharray="11 4"/>
<path d="M363.5 429.7A108 108 0 0 1 361.5 512.7A27.3 27.3 0 0 1 329.2 527.9A33.6 33.6 0 0 0 287.3 567.8" stroke="#6AD2DA" stroke-width="1.15"/>
<path d="M262.8 468.8L267.8 463.6H276.6M336.5 501.6L340.9 495.8H350.0M363.5 429.7L368.1 425.1H405.7M368.5 424.1H379.5M315.1 553.0L322.4 568.2M318.0 561.2L332.7 555.9"/>
<path d="M750.3 261.5V482.3L562.3 365.8A221 221 0 0 1 750.3 261.5H816.7"/>
<path d="M753.1 261L757.3 255.5H811M757.3 256.5H803.2M750.3 277.2H760.5V261.5M784.7 261.5A34.4 34.4 0 0 1 750.3 295.9M750.2 482.3L754.7 476.4H763.8"/>
</svg>
<div class="a" style="left:897px;top:108px;width:3px;height:522px;background:#EDECE7"></div>
<div class="dk" style="left:900px;top:108px;width:2px;height:522px"></div>
<div class="a" style="left:902px;top:108px;width:1.5px;height:522px;background:#F6F5F1"></div>
<div class="dk" style="left:903.5px;top:109px;width:1.5px;height:520px"></div>
<div class="a" style="left:904px;top:109.5px;width:166px;height:13px;background:#B6B6B6"></div>
<div class="dk" style="left:904px;top:122.5px;width:166px;height:1px;background:#6e6d69"></div>
<div class="a" style="left:905px;top:123.5px;width:164.5px;height:504px;background:#fff"></div>
<div class="a" style="left:1069.5px;top:109px;width:2.5px;height:520px;background:#F3F2EE"></div>
<div class="dk" style="left:1072px;top:109px;width:1.5px;height:520px"></div>
<div class="a" style="left:905px;top:627.5px;width:167px;height:1.5px;background:#F6F5F1"></div>
<div class="btn" style="left:1058.5px;top:112px;width:10px;height:8.5px;background:#EDECE7"></div>
<svg style="left:1060.8px;top:114px" width="5.4" height="4.4" viewBox="0 0 5.4 4.4" ><path d="M0.5 0.3L4.9 4.1M4.9 0.3L0.5 4.1" stroke="#000" stroke-width="1.4"/></svg>
<div class="a" style="left:934.4px;top:126px;width:44.4px;height:11.8px;background:#E6E6E6"></div>
<span class="t tr" style="left:936.7px;top:124.8px;font-size:9.4px;transform:scaleX(0.915);transform-origin:0 50%;">Views (all)</span>
<span class="t tr" style="left:940px;top:138.2px;font-size:9.4px;transform:scaleX(0.905);transform-origin:0 50%;">Floor Plans</span>
<span class="t tr" style="left:955.1px;top:151.7px;font-size:9.4px;transform:scaleX(0.838);transform-origin:0 50%;">Level 1</span>
<span class="t tr" style="left:940px;top:165.2px;font-size:9.4px;transform:scaleX(0.922);transform-origin:0 50%;">Ceiling Plans</span>
<span class="t tr" style="left:936.9px;top:178.6px;font-size:9.4px;transform:scaleX(0.893);transform-origin:0 50%;">Legends</span>
<span class="t tr" style="left:936.9px;top:192.1px;font-size:9.4px;transform:scaleX(0.942);transform-origin:0 50%;">Schedules/Quantities</span>
<span class="t tr" style="left:936.9px;top:205.5px;font-size:9.4px;transform:scaleX(0.890);transform-origin:0 50%;">Sheets (all)</span>
<span class="t tr" style="left:936.9px;top:219.0px;font-size:9.4px;transform:scaleX(0.900);transform-origin:0 50%;">Families</span>
<span class="t tr" style="left:936.9px;top:232.4px;font-size:9.4px;transform:scaleX(0.905);transform-origin:0 50%;">Groups</span>
<span class="t tr" style="left:936.9px;top:245.8px;font-size:9.4px;transform:scaleX(0.907);transform-origin:0 50%;">Revit Links</span>
<svg style="left:0;top:0" width="1077" height="648" viewBox="0 0 1077 648"><g stroke="#B4B4B4" stroke-width="1" stroke-dasharray="1 1.2" fill="none"><path d="M911.5 136V252.2"/><path d="M926.5 137.5V169"/><path d="M915 132.5H920"/><path d="M930 144.7H938M930 171.6H938"/><path d="M941.5 150V158.3H953"/><path d="M911.5 185.0H919.5"/><path d="M911.5 198.5H919.5"/><path d="M911.5 211.9H919.5"/><path d="M911.5 252.2H919.5"/><path d="M915 225.4H919.5"/><path d="M915 238.8H919.5"/></g><rect x="908.5" y="129.5" width="6" height="6" fill="#fff" stroke="#9a9a9a" stroke-width="1"/><path d="M909.9 132.5H913.1" stroke="#000" stroke-width="1"/><rect x="923.5" y="141.65" width="6" height="6" fill="#fff" stroke="#9a9a9a" stroke-width="1"/><path d="M924.9 144.65H928.1" stroke="#000" stroke-width="1"/><rect x="923.5" y="168.55" width="6" height="6" fill="#fff" stroke="#9a9a9a" stroke-width="1"/><path d="M924.9 171.55H928.1" stroke="#000" stroke-width="1"/><path d="M926.5 169.95000000000002V173.15" stroke="#000" stroke-width="1"/><rect x="908.5" y="222.35000000000002" width="6" height="6" fill="#fff" stroke="#9a9a9a" stroke-width="1"/><path d="M909.9 225.35000000000002H913.1" stroke="#000" stroke-width="1"/><path d="M911.5 223.75000000000003V226.95000000000002" stroke="#000" stroke-width="1"/><rect x="908.5" y="235.8" width="6" height="6" fill="#fff" stroke="#9a9a9a" stroke-width="1"/><path d="M909.9 238.8H913.1" stroke="#000" stroke-width="1"/><path d="M911.5 237.20000000000002V240.4" stroke="#000" stroke-width="1"/></svg>
<svg style="left:920.7px;top:126px" width="11.6" height="10.8" viewBox="0 0 11.6 10.8" ><path d="M0.6 2.6V0.6H3M8.6 0.6H11V2.6M11 8.2V10.2H8.6M3 10.2H0.6V8.2" fill="none" stroke="#3b3b44" stroke-width="1.2"/><rect x="3.2" y="2.8" width="5.2" height="5" rx="1.2" fill="#fff" stroke="#3b3b44" stroke-width="1"/></svg>
<svg style="left:920.3px;top:179.3px" width="12" height="11.3" viewBox="0 0 12 11.3" ><rect x="0.6" y="0.6" width="10.8" height="10.1" fill="#F1F2F6" stroke="#3b3b44" stroke-width="1.1"/><rect x="0.6" y="0.6" width="10.8" height="2.4" fill="#8a8c9a"/><rect x="2" y="4.4" width="2.4" height="1.8" fill="#555"/><rect x="2" y="7.4" width="2.4" height="1.8" fill="#555"/><path d="M5.6 5.2H7.6M5.6 8.2H7.2M8.4 4.4V9.4H10" stroke="#666" stroke-width=".9" fill="none"/></svg>
<svg style="left:920.3px;top:192.8px" width="12" height="10.6" viewBox="0 0 12 10.6" ><rect x="0.6" y="0.6" width="10.8" height="9.4" rx="1" fill="#F6F6F8" stroke="#3b3b44" stroke-width="1.1"/><rect x="0.6" y="0.6" width="10.8" height="2.2" fill="#777986"/><path d="M0.6 5H11.4M0.6 7.4H11.4M4 2.8V10" stroke="#777986" stroke-width=".9"/></svg>
<svg style="left:920.3px;top:206px" width="12" height="11" viewBox="0 0 12 11" ><path d="M0.6 0.6H8.4L11.4 3.4V10.4H0.6Z" fill="#FBFBFC" stroke="#3b3b44" stroke-width="1.1"/><path d="M8.4 0.6V3.4H11.4" fill="none" stroke="#3b3b44" stroke-width=".9"/><path d="M2.2 4.6H6.2V8.4H2.2M3.2 6.2H5.2M7.6 5.6V8.6H9.4" fill="none" stroke="#6a7ab0" stroke-width=".9"/></svg>
<svg style="left:921px;top:219.2px" width="11" height="11.6" viewBox="0 0 11 11.6" ><path d="M0.6 6.4V11H10.2V0.6H7.4V5.4H5" fill="#fff" stroke="#3b3b44" stroke-width="1.1"/><rect x="1.4" y="0.6" width="3.4" height="4.6" fill="#F1F2F6" stroke="#3b3b44" stroke-width="1"/></svg>
<svg style="left:920.6px;top:232.6px" width="11.6" height="11.6" viewBox="0 0 11.6 11.6" ><path d="M2.4 0.6H0.6V11H2.4M9.2 0.6H11V11H9.2" fill="none" stroke="#3b3b44" stroke-width="1.2"/><path d="M3 4.4L5.4 2.4L8.8 4V7.4L6.4 9.4L3 7.8Z" fill="#F1F2F6" stroke="#6a6c7a" stroke-width="1"/><circle cx="6.2" cy="6" r="1.6" fill="none" stroke="#8a8c9a" stroke-width=".8"/></svg>
<svg style="left:919.6px;top:248.6px" width="12.6" height="6.6" viewBox="0 0 12.6 6.6" ><ellipse cx="3.6" cy="3.3" rx="2.9" ry="2.3" fill="none" stroke="#D9A520" stroke-width="1.7"/><ellipse cx="9" cy="3.3" rx="2.9" ry="2.3" fill="none" stroke="#C8960c" stroke-width="1.7"/></svg>
<div class="gl" style="left:3px;top:631px;width:908px;height:1px;background:#BAB8B0"></div>
<div class="gl" style="left:3px;top:631px;width:1px;height:14px;background:#BAB8B0"></div>
<div class="wl" style="left:3px;top:644px;width:908px;height:1px"></div>
<div class="wl" style="left:911px;top:631px;width:1px;height:14px"></div>
<span class="t st" style="left:5px;top:632px;font-size:9.15px">Click to select, TAB for alternates, CTRL adds, SHIFT unselects.</span>
<div class="a" style="left:914px;top:631px;width:22px;height:14px;border:1px solid #A9A79F;border-right-color:#fff;border-bottom-color:#fff"></div>
<div class="a" style="left:938px;top:631px;width:23.5px;height:14px;border:1px solid #A9A79F;border-right-color:#fff;border-bottom-color:#fff"></div>
<div class="a" style="left:963px;top:631px;width:24.5px;height:14px;border:1px solid #A9A79F;border-right-color:#fff;border-bottom-color:#fff"></div>
<div class="a" style="left:989px;top:631px;width:70px;height:14px;border:1px solid #A9A79F;border-right-color:#fff;border-bottom-color:#fff"></div>
<svg style="left:990px;top:632.5px" width="12" height="11.5" viewBox="0 0 12 11.5" ><path d="M0.6 0.8H11.4L7.4 5.6V10.8L4.6 9.2V5.6Z" fill="#C9D3E0" stroke="#6B7A90" stroke-width="1"/></svg>
<span class="t" style="left:1003.5px;top:632px;">:0</span>
<svg style="left:1062px;top:634px" width="12" height="12" viewBox="0 0 12 12" ><path d="M11 1L1 11M11 5L5 11M11 9L9 11" stroke="#A9A79F" stroke-width="1"/><path d="M11 2L2 11M11 6L6 11M11 10L10 11" stroke="#fff" stroke-width="1"/></svg>
</body>
</html>
